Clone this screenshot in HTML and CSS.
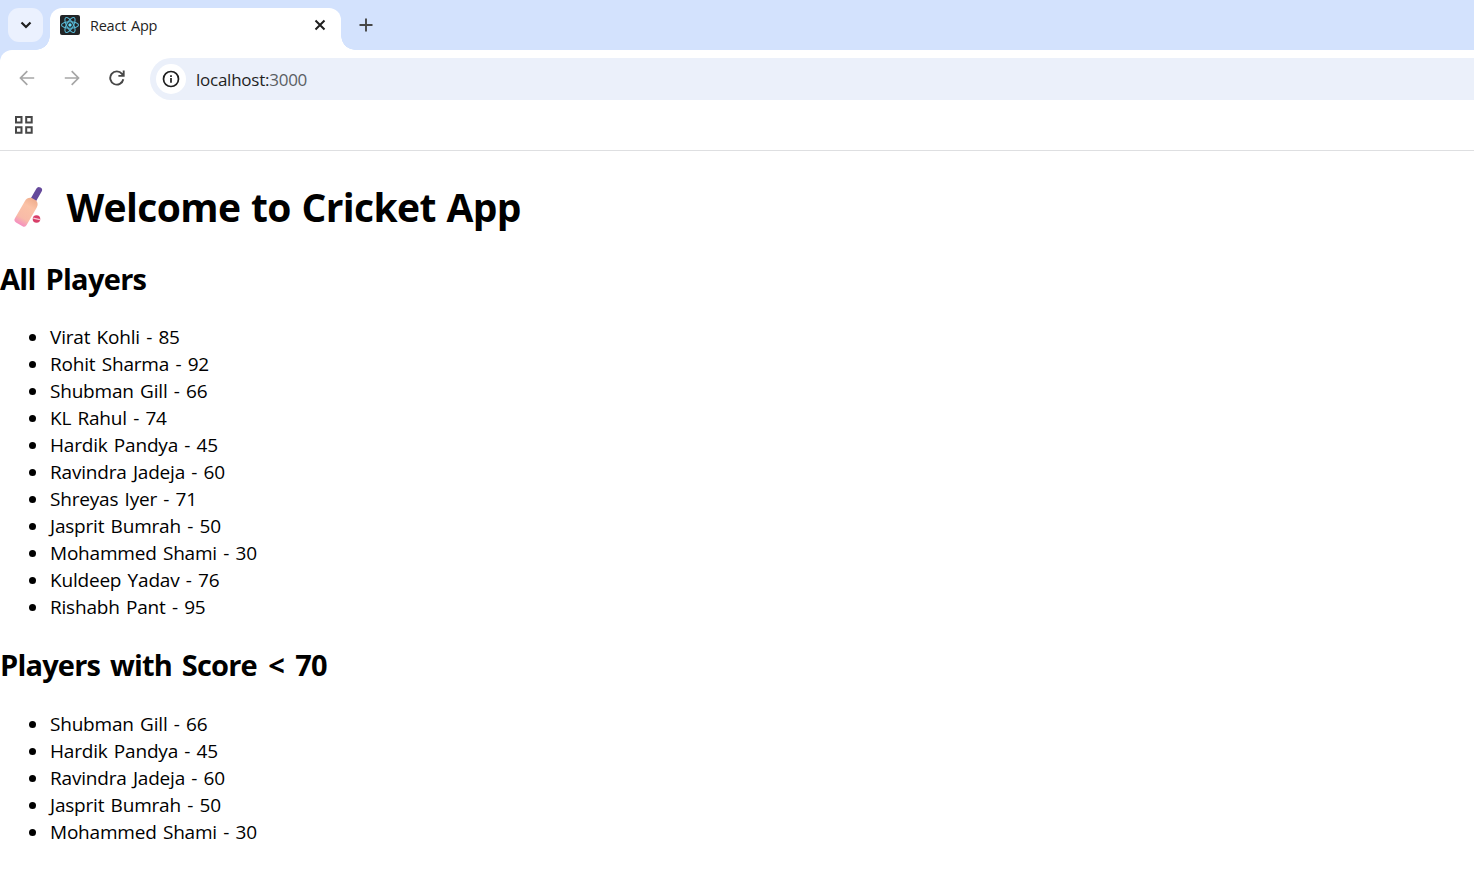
FILE: index.html
```html
<!DOCTYPE html>
<html lang="en">
<head>
<meta charset="utf-8">
<title>React App</title>
<link rel="stylesheet" href="styles.css">
</head>
<body>
<header class="browser">
  <div class="tab-strip">
    <button class="tab-search" aria-label="Search tabs">
      <svg width="12" height="8" viewBox="0 0 12 8"><path d="M1.500 1.500 6 6l4.500-4.500" fill="none" stroke="#1f1f1f" stroke-width="2.200"/></svg>
    </button>
    <div class="tab">
      <svg class="favicon" width="20" height="20" viewBox="0 0 20 20">
        <rect width="20" height="20" rx="2" fill="#222426"/>
        <g fill="none" stroke="#58b9d6" stroke-width="1.100">
          <ellipse cx="10" cy="10" rx="8.500" ry="3.300"/>
          <ellipse cx="10" cy="10" rx="8.500" ry="3.300" transform="rotate(60 10 10)"/>
          <ellipse cx="10" cy="10" rx="8.500" ry="3.300" transform="rotate(120 10 10)"/>
        </g>
        <circle cx="10" cy="10" r="1.700" fill="#61dafb"/>
      </svg>
      <span class="tab-title">React App</span>
      <svg class="tab-close" width="12" height="12" viewBox="0 0 12 12"><path d="m1.500 1.500 9 9m0-9-9 9" stroke="#1f1f1f" stroke-width="2"/></svg>
    </div>
    <svg class="new-tab" width="14" height="14" viewBox="0 0 14 14"><path d="M7 .5v13M.5 7h13" stroke="#474747" stroke-width="1.900"/></svg>
  </div>
  <div class="toolbar">
    <nav class="nav-icons">
      <svg width="16" height="16" viewBox="0 0 16 16"><path d="M15.200 8H2M8.300 1.200 1.500 8l6.800 6.800" fill="none" stroke="#a6a6a6" stroke-width="1.700"/></svg>
      <svg width="16" height="16" viewBox="0 0 16 16"><path d="M.8 8H14M7.700 1.200 14.500 8l-6.800 6.800" fill="none" stroke="#a6a6a6" stroke-width="1.700"/></svg>
      <svg width="16" height="16" viewBox="0 0 16 16"><path d="M14.300 9.300A6.600 6.600 0 1 1 13 3.900l1 1.500M14.700.6v5.300H9.400" fill="none" stroke="#474747" stroke-width="1.900"/></svg>
    </nav>
    <div class="address">
      <span class="site-info">
        <svg width="18" height="18" viewBox="0 0 18 18"><circle cx="9" cy="9" r="7.500" fill="none" stroke="#1f1f1f" stroke-width="1.700"/><path d="M9 8v4.800M9 5.200V7" stroke="#1f1f1f" stroke-width="1.700"/></svg>
      </span>
      <span class="url">localhost:<span class="port">3000</span></span>
    </div>
  </div>
  <div class="bookmarks">
    <svg width="18" height="18" viewBox="0 0 18 18"><path d="M1 1h5.500v5.500H1zM11.200 1h5.500v5.500h-5.500zM1 11.200h5.500v5.500H1zM11.200 11.200h5.500v5.500h-5.500z" fill="none" stroke="#474747" stroke-width="2"/></svg>
  </div>
</header>
<main class="page">
  <h1 class="title">
    <svg class="bat" width="30" height="42" viewBox="0 0 30 42">
      <defs><linearGradient id="blade" x1="0" y1="0" x2="0" y2="1"><stop offset="0" stop-color="#efae8e"/><stop offset=".3" stop-color="#fbc2a6"/><stop offset=".75" stop-color="#f8bba8"/><stop offset="1" stop-color="#f58fc0"/></linearGradient></defs>
      <g transform="translate(0 1) rotate(30 15 21)">
        <rect x="11.700" y="-2.500" width="6" height="17" rx="2.900" fill="#65499b"/>
        <path d="M12 11h5.500q4 1.500 4 6v20q0 3-3 3h-7.500q-3 0-3-3V17q0-4.500 4-6z" fill="url(#blade)"/>
      </g>
      <circle cx="22.500" cy="33" r="3.800" fill="#d83f69"/>
      <path d="m19.300 32.200 6.600 1.500" stroke="#f7c9d6" stroke-width="1.300"/>
    </svg>
    <span class="title-text">Welcome to Cricket App</span>
  </h1>
  <h2 class="heading all">All Players</h2>
  <ul class="players">
    <li>Virat Kohli - 85</li>
    <li>Rohit Sharma - 92</li>
    <li>Shubman Gill - 66</li>
    <li>KL Rahul - 74</li>
    <li>Hardik Pandya - 45</li>
    <li>Ravindra Jadeja - 60</li>
    <li>Shreyas Iyer - 71</li>
    <li>Jasprit Bumrah - 50</li>
    <li>Mohammed Shami - 30</li>
    <li>Kuldeep Yadav - 76</li>
    <li>Rishabh Pant - 95</li>
  </ul>
  <h2 class="heading low">Players with Score <span class="sign">&lt;</span> 70</h2>
  <ul class="players filtered">
    <li>Shubman Gill - 66</li>
    <li>Hardik Pandya - 45</li>
    <li>Ravindra Jadeja - 60</li>
    <li>Jasprit Bumrah - 50</li>
    <li>Mohammed Shami - 30</li>
  </ul>
</main>
</body>
</html>
```
FILE: styles.css
```css
* { box-sizing: border-box; }
body {
  margin: 0;
  background: #fff;
  color: #000;
  font-family: "Segoe UI", "Open Sans", "Noto Sans", sans-serif;
  overflow: hidden;
}
svg { display: block; flex: none; }

.browser { background: #d3e2fd; }
.tab-strip { display: flex; height: 50px; padding: 8px 0 0 8px; }
.tab-search {
  display: flex;
  align-items: center;
  justify-content: center;
  width: 35px;
  height: 34px;
  margin-right: 7px;
  padding: 0;
  border: 0;
  border-radius: 11px;
  background: #ebf1fe;
}
.tab {
  position: relative;
  display: flex;
  align-items: center;
  width: 291px;
  height: 42px;
  padding: 0 15px 8px 10px;
  border-radius: 12px 12px 0 0;
  background: #fff;
}
.tab::before, .tab::after {
  content: "";
  position: absolute;
  bottom: 0;
  width: 14px;
  height: 14px;
}
.tab::before { right: 100%; background: radial-gradient(circle at 0 0, transparent 13.500px, #fff 14px); }
.tab::after { left: 100%; background: radial-gradient(circle at 100% 0, transparent 13.500px, #fff 14px); }
.tab-title {
  flex: 1;
  margin-left: 10px;
  font-size: 14.500px;
  letter-spacing: -0.250px;
  word-spacing: 1.500px;
  color: #1f1f1f;
}
.new-tab { margin: 10px 0 0 18px; }

.toolbar {
  display: flex;
  height: 50px;
  padding-top: 8px;
  border-radius: 12px 0 0;
  background: #fff;
}
.nav-icons { display: flex; align-items: center; gap: 29px; width: 150px; padding: 0 0 2px 19.400px; }
.address {
  display: flex;
  align-items: center;
  flex: 1;
  height: 42px;
  padding-left: 6px;
  border-radius: 21px 0 0 21px;
  background: #ebf0fa;
}
.site-info {
  display: flex;
  align-items: center;
  justify-content: center;
  width: 30px;
  height: 30px;
  border-radius: 50%;
  background: #fff;
}
.url { margin-left: 10px; font-size: 17px; letter-spacing: -0.250px; color: #1f1f1f; }
.port { color: #5a5e63; }
.bookmarks { height: 51px; padding: 16px 0 0 15px; border-bottom: 1px solid #dedfe1; background: #fff; }

.page { padding-top: 29px; }
.title { display: flex; align-items: center; height: 53px; margin: 0; padding-left: 14px; line-height: 53px; }
.bat { overflow: visible; }
.title-text { margin-left: 22.500px; font-size: 39px; letter-spacing: -0.600px; word-spacing: 1px; white-space: nowrap; }
.heading { height: 40px; margin: 0; font-size: 29px; letter-spacing: -0.700px; word-spacing: 3px; line-height: 40px; }
.low { letter-spacing: -0.800px; }
.sign { padding: 0 1.500px; }
.all { margin-top: 26px; }
.low { margin-top: 24px; }
.players { margin: 25px 0 0; padding-left: 49px; font-size: 19px; letter-spacing: -0.200px; word-spacing: 1.600px; line-height: 27px; }
.players li { padding-left: 1px; }
.filtered { margin-top: 26px; }
```
